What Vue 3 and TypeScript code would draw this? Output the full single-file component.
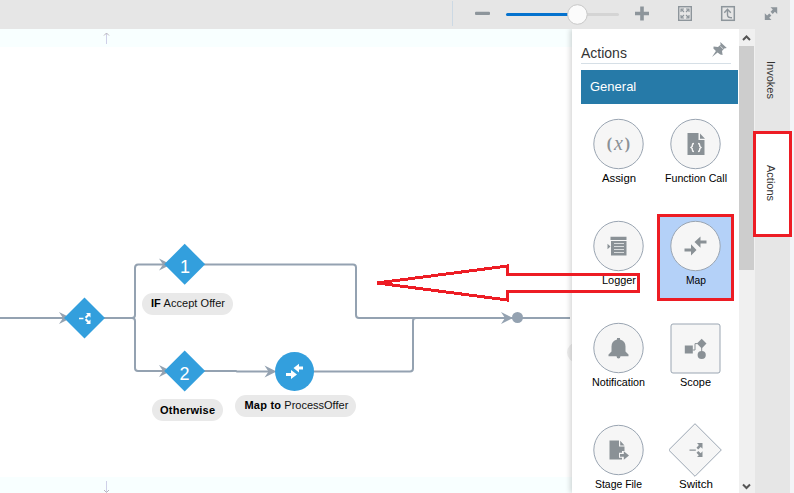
<script setup lang="ts">
interface PaletteItem {
  id: string
  label: string
  shape: 'circle' | 'square' | 'diamond'
  width: number
}

const items: PaletteItem[] = [
  { id: 'assign', label: 'Assign', shape: 'circle', width: 34 },
  { id: 'function', label: 'Function Call', shape: 'circle', width: 62 },
  { id: 'logger', label: 'Logger', shape: 'circle', width: 34 },
  { id: 'map', label: 'Map', shape: 'circle', width: 20 },
  { id: 'notification', label: 'Notification', shape: 'circle', width: 53 },
  { id: 'scope', label: 'Scope', shape: 'square', width: 31 },
  { id: 'stage', label: 'Stage File', shape: 'circle', width: 47 },
  { id: 'switch', label: 'Switch', shape: 'diamond', width: 34 },
]
const selected = 'map'
</script>

<template>
  <div class="designer">
    <header class="toolbar">
      <div class="tools">
        <svg class="tool-svg" width="338" height="29" viewBox="452 0 338 29">
          <path d="M452.5 1V26" stroke="#ccd9e4" />
          <rect x="475" y="11.7" width="15" height="3.2" rx="1" fill="#8d959b" />
          <rect x="568" y="13" width="51" height="3" rx="1.5" fill="#d4d4d4" />
          <rect x="506" y="13" width="68" height="3" rx="1.5" fill="#0572ce" />
          <circle cx="577.4" cy="14.5" r="9.8" fill="#fbfbfb" stroke="#c8c8c8" />
          <path d="M635 13.5H649M642 6.5V20.5" stroke="#8d959b" stroke-width="3.6" />
          <rect x="678.7" y="6.7" width="12.6" height="13.6" fill="none" stroke="#8d959b" stroke-width="1.4" />
          <path d="M681 12V9H684M686 9H689V12M681 15V18H684M686 18H689V15M681.5 9.5L684 12M688.5 9.5L686 12M681.5 17.5L684 15M688.5 17.5L686 15" fill="none" stroke="#8d959b" stroke-width="1.1" />
          <rect x="721.7" y="6.7" width="12.6" height="13.6" fill="none" stroke="#8d959b" stroke-width="1.5" />
          <path d="M724.3 12.8L727.5 9.3L730.8 12.8M727.5 9.5V15Q727.5 17.8 732 17.8" fill="none" stroke="#8d959b" stroke-width="1.4" />
          <path d="M770.5 7.3H777.2V14L774.9 11.7L772.7 13.9L770.6 11.8L772.8 9.6ZM764.8 13.3V20H771.5L769.2 17.7L771.4 15.5L769.3 13.4L767.1 15.6Z" fill="#8d959b" />
        </svg>
      </div>
    </header>

    <div class="workspace">
      <main class="canvas">
        <svg class="diagram" width="572" height="464" viewBox="0 29 572 464">
          <rect x="0" y="29" width="572" height="18" fill="#f8ffff" />
          <rect x="0" y="477" width="572" height="16" fill="#f8ffff" />
          <g fill="none" stroke="#cfd0e8">
            <path d="M106.5 33V44" />
            <path d="M104 35.5L106.5 33L109 35.5" stroke="#b9b5bd" />
            <path d="M106.5 481V492" />
            <path d="M104 490L106.5 492.5L109 490" stroke="#b9b5bd" />
          </g>
          <g fill="none" stroke="#94a2b1" stroke-width="2">
            <path d="M0 318H66" />
            <path d="M104 318H132Q135 318 135 315V268Q135 264.5 138 264.5H164" />
            <path d="M132 318Q135 318 135 321V368Q135 371 138 371H164" />
            <path d="M204 264.5H353Q356 264.5 356 267.5V315Q356 318 359 318H570" />
            <path d="M204 371H236L237 371.6H270" />
            <path d="M313 371.5H410Q413 371.5 413 368.5V321Q413 318 416 318" />
          </g>
          <g fill="#94a2b1">
            <path d="M59 312L71 318L59 324L63 318Z" />
            <path d="M159 258.5L171 264.5L159 270.5L163 264.5Z" />
            <path d="M159 365L171 371L159 377L163 371Z" />
            <path d="M264.5 365.5L276.5 371.5L264.5 377.5L268.5 371.5Z" />
            <path d="M501 312L513 318L501 324L505 318Z" />
            <circle cx="517.5" cy="317.5" r="5.5" />
          </g>
          <g fill="#339fdd">
            <path d="M84.5 297.5L105 318L84.5 338.5L64 318Z" />
            <path d="M184.7 243.8L205.2 264.3L184.7 284.8L164.2 264.3Z" />
            <path d="M184.7 350.5L205.2 371L184.7 391.5L164.2 371Z" />
            <circle cx="294.5" cy="371.5" r="19.5" />
          </g>
          <g fill="#fff">
            <path d="M79 317.8H83.5V319.2H79ZM86 313H90.5V317.5L89 316L86.3 318.6L84.8 317.1L87.5 314.5ZM90.5 319.5V324H86L87.5 322.5L84.8 319.9L86.3 318.4L89 321Z" />
            <path d="M286 373H291V370L297 374.5L291 379V376H286ZM303 366.5H299V363.8L293.5 368L299 372.5V369.5H303Z" />
          </g>
          <g class="number" text-anchor="middle">
            <text x="185" y="272.5">1</text>
            <text x="184.6" y="379.5">2</text>
          </g>
          <g fill="#e9e9e9">
            <rect x="142" y="293" width="91" height="22" rx="11" />
            <rect x="152" y="399" width="71" height="22" rx="11" />
            <rect x="235" y="395" width="121" height="22" rx="11" />
            <circle cx="577" cy="352.5" r="10" fill="#eee" />
          </g>
          <g class="caption">
            <text x="151" y="307" class="strong">IF</text>
            <text x="163.5" y="307" textLength="61.5">Accept Offer</text>
            <text x="160" y="414" textLength="55" class="strong">Otherwise</text>
            <text x="244.5" y="409" textLength="36.5" class="strong">Map to</text>
            <text x="284.3" y="409" textLength="64">ProcessOffer</text>
          </g>
        </svg>
      </main>

      <aside class="panel">
        <div class="panel-head">
          <span>Actions</span>
          <svg width="16" height="16" viewBox="0 0 16 16">
            <path d="M9.3 0L15.8 6L13.2 6.4L11 9L11.6 13L9.2 12.6L6.6 10.4L1 15L4.9 9L2.4 6.6L2.6 4.6L7 5L9.6 2.8Z" fill="#8d959b" />
            <path d="M9.3 4.2L12.3 7" stroke="#d5d8da" />
          </svg>
        </div>
        <div class="group-title">General</div>
        <div class="palette">
          <div v-for="item in items" :key="item.id" class="item" :class="{ selected: item.id === selected }">
            <svg width="54" height="54" viewBox="-26.5 -27 54 54">
              <g fill="#f6f6f6" stroke="#9aa5b2">
                <circle v-if="item.shape === 'circle'" r="24.7" />
                <rect v-else-if="item.shape === 'square'" x="-24.5" y="-24" width="49" height="49" rx="2" />
                <path v-else d="M-.5 -26.3L25.8 0L-.5 26.3L-26.8 0Z" />
              </g>
              <g fill="#8a9196">
                <g v-if="item.id === 'assign'" text-anchor="middle">
                  <text x="-9" y="5" class="paren">(</text>
                  <text x="0" y="5.5" class="variable">x</text>
                  <text x="9" y="5" class="paren">)</text>
                </g>
                <template v-else-if="item.id === 'function'">
                  <path d="M-8 -11H3V-4H9V11H-8ZM4.5 -10.5L9.5 -5.3H4.5Z" />
                  <path d="M-1.5 -.5Q-3.2 -.5 -3.2 1.2V2.2L-4.5 3.5L-3.2 4.7V5.7Q-3.2 7.5 -1.5 7.5M2.5 -.5Q4.2 -.5 4.2 1.2V2.2L5.5 3.5L4.2 4.7V5.7Q4.2 7.5 2.5 7.5" fill="none" stroke="#f6f6f6" stroke-width="1.4" />
                </template>
                <template v-else-if="item.id === 'logger'">
                  <path d="M-8 -9.3H8V-6H-8ZM-7.5 -5H8V9.5H-7.5ZM-11 -2.2L-8 .5L-11 3.2Z" />
                  <path d="M-4.5 -2.5H5.5M-4.5 .5H5.5M-4.5 3.5H5.5M-4.5 6.5H5.5" stroke="#e2e4e5" stroke-width=".9" />
                </template>
                <path v-else-if="item.id === 'map'" d="M-11 2.5H-4.5V-1.8L1 4L-4.5 9.6V5.6H-11ZM11 -5.5H5V-9.6L-1 -4L5 1.8V-2.5H11Z" />
                <path v-else-if="item.id === 'notification'" d="M-1.5 -10H1.5V-8.4Q7 -7 7 -1.5V3.5L10 6.5V8.3H2Q1.8 10.5 0 10.5Q-1.8 10.5 -2 8.3H-10V6.5L-7 3.5V-1.5Q-7 -7 -1.5 -8.4Z" />
                <template v-else-if="item.id === 'scope'">
                  <path d="M-10.7 -2.5H-2.7V5.5H-10.7ZM6.2 -9.2L11 -4.4L6.2 .4L1.4 -4.4Z" />
                  <circle cx="6.2" cy="7" r="4.1" />
                  <path d="M-3 2H-.5V-4.4H2M6.2 0V4" fill="none" stroke="#8a9196" />
                </template>
                <path v-else-if="item.id === 'stage'" d="M-9 -9.5H.5V-3.5H6V1H3.5V2.8H.5V7.8H3.5V9.5H-9ZM1.7 -9.2L6 -4.6H1.7ZM1.5 4H5.3V1.2L10.5 5.4L5.3 9.7V6.7H1.5Z" />
                <path v-else d="M-6 -.6H.3V.7H-6ZM1.5 -7H7V-1.3L5.2 -3.1L2.7 -.5L1 -2.2L3.4 -5ZM7 1.3V7H1.5L3.3 5.2L1 2.8L2.8 1L5.2 3.2Z" />
              </g>
            </svg>
            <svg class="label" :width="item.width" height="14">
              <text x="0" y="10.5" :textLength="item.width" lengthAdjust="spacingAndGlyphs">{{ item.label }}</text>
            </svg>
          </div>
        </div>
      </aside>

      <div class="scrollbar">
        <svg width="16" height="17" viewBox="0 0 16 17"><path d="M4 11L7.5 7.5L11 11" fill="none" stroke="#555" stroke-width="2" /></svg>
        <div class="thumb"></div>
        <svg class="down" width="16" height="16" viewBox="0 0 16 16"><path d="M4 7.5L7.5 11L11 7.5" fill="none" stroke="#555" stroke-width="2" /></svg>
      </div>

      <nav class="tabs">
        <div class="tab invokes"><span>Invokes</span></div>
        <div class="tab actions"><span>Actions</span></div>
      </nav>
      <div class="edge"></div>
    </div>

    <svg class="callout" width="794" height="493" viewBox="0 0 794 493" shape-rendering="crispEdges">
      <path d="M377 283L507.5 266V274.5H638.5V291.5H507.5V300Z" fill="none" stroke="#ed1c24" stroke-width="3" stroke-linejoin="miter" stroke-miterlimit="2" />
      <rect x="754.5" y="132.5" width="36" height="103" fill="none" stroke="#ed1c24" stroke-width="3" />
    </svg>
  </div>
</template>

<style>
body { margin: 0; overflow: hidden; }
</style>

<style scoped>
.designer {
  position: relative;
  width: 794px;
  height: 493px;
  display: flex;
  flex-direction: column;
  overflow: hidden;
  background: #fff;
  font-family: "Liberation Sans", Arial, sans-serif;
  color: #333;
}
.toolbar {
  height: 29px;
  display: flex;
  justify-content: flex-end;
  background: #e6e6e6;
  border-right: 4px solid #f3f4f7;
}
.tools, .tool-svg, .diagram { display: block; }
.workspace { display: flex; height: 464px; }
.canvas { width: 572px; flex: none; background: #fff; }
.panel {
  width: 167px;
  height: 464px;
  flex: none;
  background: #fff;
  box-shadow: -2px 0 5px rgba(0, 0, 0, 0.16);
  clip-path: inset(0 0 0 -8px);
}
.panel-head {
  box-sizing: border-box;
  width: 150px;
  height: 35px;
  margin-left: 9px;
  padding: 13px 4px 0 0;
  display: flex;
  justify-content: space-between;
  border-bottom: 1px solid #d6dfe6;
  font-size: 14px;
  line-height: 22px;
}
.group-title {
  height: 34px;
  margin: 6px 1px 0 9px;
  padding-left: 9px;
  background: #267aa8;
  color: #fff;
  font-size: 13px;
  line-height: 33px;
}
.palette {
  display: grid;
  grid-template-columns: 77px 77px;
  grid-auto-rows: 87px;
  row-gap: 15px;
  margin: 8px 0 0 8px;
}
.item {
  box-sizing: border-box;
  display: flex;
  flex-direction: column;
  align-items: center;
  border: 3px solid transparent;
  padding-top: 2px;
}
.item > svg { display: block; flex: none; }
.item.selected { border-color: #ed1c24; background: #b4d1f8; }
.label { overflow: visible; fill: #000; font-size: 11px; }
.paren { font: bold 16px "Liberation Serif", serif; }
.variable { font: italic 20px "Liberation Serif", serif; }
.number { fill: #fff; font-size: 18px; }
.caption { fill: #111; font-size: 11px; }
.strong { font-weight: bold; fill: #000; }
.scrollbar { width: 16px; flex: none; display: flex; flex-direction: column; background: #f0f0f0; }
.thumb { width: 15px; height: 224px; background: #cdcdcd; }
.down { margin-top: auto; }
.tabs { width: 35px; flex: none; background: #e6e6e6; }
.tab {
  display: flex;
  justify-content: center;
  align-items: center;
  box-sizing: border-box;
  writing-mode: vertical-rl;
  width: 35px;
  height: 103px;
  padding: 0 4px 2px 0;
  font-size: 11px;
}
.tab.actions { height: 104px; background: #fff; }
.edge { width: 4px; background: #f3f4f7; }
.callout { position: absolute; left: 0; top: 0; pointer-events: none; }
</style>
